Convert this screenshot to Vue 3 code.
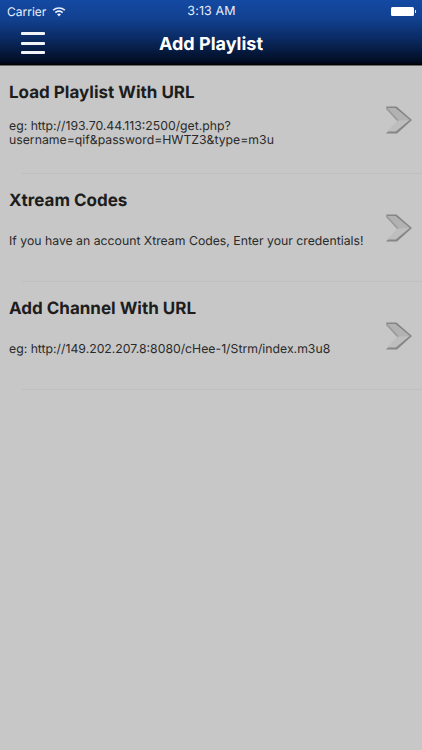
<script setup>
const rows = [
  { title: 'Load Playlist With URL', lines: ['eg: http://193.70.44.113:2500/get.php?', 'username=qif&password=HWTZ3&type=m3u'] },
  { title: 'Xtream Codes', lines: ['If you have an account Xtream Codes, Enter your credentials!'] },
  { title: 'Add Channel With URL', lines: ['eg: http://149.202.207.8:8080/cHee-1/Strm/index.m3u8'] },
]
</script>

<template>
  <div class="screen">
    <header class="head">
      <div class="status">
        <div class="status-left">
          <span>Carrier</span>
          <svg class="wifi" width="14" height="11" viewBox="0 0 14 11">
            <path d="M0.6 3.6C4.2 0.3 9.8 0.3 13.4 3.6L12.3 4.8C9.3 2.1 4.7 2.1 1.7 4.8Z" fill="#e8eefb" />
            <path d="M2.8 6C5.2 3.8 8.8 3.8 11.2 6L10.1 7.2C8.3 5.6 5.7 5.6 3.9 7.2Z" fill="#e8eefb" />
            <path d="M5 8.3C6.2 7.3 7.8 7.3 9 8.3L7 10.5Z" fill="#e8eefb" />
          </svg>
        </div>
        <span class="time">3:13 AM</span>
        <div class="battery"><i class="cell"></i><i class="nub"></i></div>
      </div>
      <div class="nav">
        <div class="burger"><i></i><i></i><i></i></div>
        <h1>Add Playlist</h1>
      </div>
    </header>
    <main>
      <section v-for="r in rows" :key="r.title" class="row">
        <div class="copy">
          <h2>{{ r.title }}</h2>
          <p><span v-for="l in r.lines" :key="l">{{ l }}</span></p>
        </div>
        <svg class="chev" width="28" height="30" viewBox="0 0 28 30">
          <path d="M1 1.5H11.5L27 15L12 28.5H1L13 16Z" fill="#868686" />
          <path d="M1 3.2H10.5L24.6 15L10.8 26.4H1.6L13.4 15.4Z" fill="#bebebe" />
          <path d="M1 3.2H10.5L24.6 15L13.4 15.4Z" fill="#b2b2b2" />
          <path d="M1 1.5L13.6 15.2L11.8 15.8L1 4Z" fill="#9a9a9a" />
        </svg>
      </section>
    </main>
  </div>
</template>

<style>
html, body { margin: 0; background: #c7c7c7; }
</style>

<style scoped>
.screen {
  width: 422px;
  height: 750px;
  background: #c7c7c7;
  font-family: Inter, "Liberation Sans", sans-serif;
  text-rendering: geometricPrecision;
  overflow: hidden;
}
.head {
  height: 65px;
  background: linear-gradient(#144aa3 0%, #11408f 30%, #0a2a62 60%, #020d22 95%, #000 100%);
  border-bottom: 1px solid #6b6b6b;
  color: #fff;
}
.status {
  box-sizing: border-box;
  height: 22px;
  padding: 1px 6px 0 7px;
  display: grid;
  grid-template-columns: 1fr auto 1fr;
  align-items: center;
  font-size: 12px;
  color: #e8eefb;
}
.status-left { display: flex; align-items: center; gap: 6px; }
.time { font-size: 12.5px; letter-spacing: 0.1px; }
.battery { justify-self: end; display: flex; align-items: center; }
.cell { display: block; width: 23px; height: 9px; background: #fff; border-radius: 1.5px; }
.nub { display: block; width: 1.5px; height: 3px; background: #dfe6f5; margin-left: 1px; }
.nav { position: relative; height: 43px; display: flex; align-items: center; justify-content: center; }
.burger {
  position: absolute;
  left: 21px;
  top: 10px;
  width: 24px;
  display: flex;
  flex-direction: column;
  gap: 6.5px;
}
.burger i { display: block; height: 3px; background: #f2f4f8; border-radius: 1px; }
h1 { margin: 0; padding-top: 2px; font-size: 18px; font-weight: 700; color: #fff; }
.row {
  box-sizing: border-box;
  height: 108px;
  position: relative;
  padding: 17px 9px 0;
}
.row::after {
  content: "";
  position: absolute;
  left: 22px;
  right: 0;
  bottom: 0;
  height: 1px;
  background: #bfbfc1;
}
h2 { margin: 0; font-size: 17px; line-height: 21px; font-weight: 700; color: #1d1d1d; }
p {
  margin: 0;
  height: 40px;
  margin-top: 9px;
  display: flex;
  flex-direction: column;
  justify-content: center;
  font-size: 12.25px;
  line-height: 14px;
  color: #2a2a2a;
}
p span { display: block; white-space: nowrap; }
.chev { position: absolute; left: 385px; top: 39px; }
</style>
